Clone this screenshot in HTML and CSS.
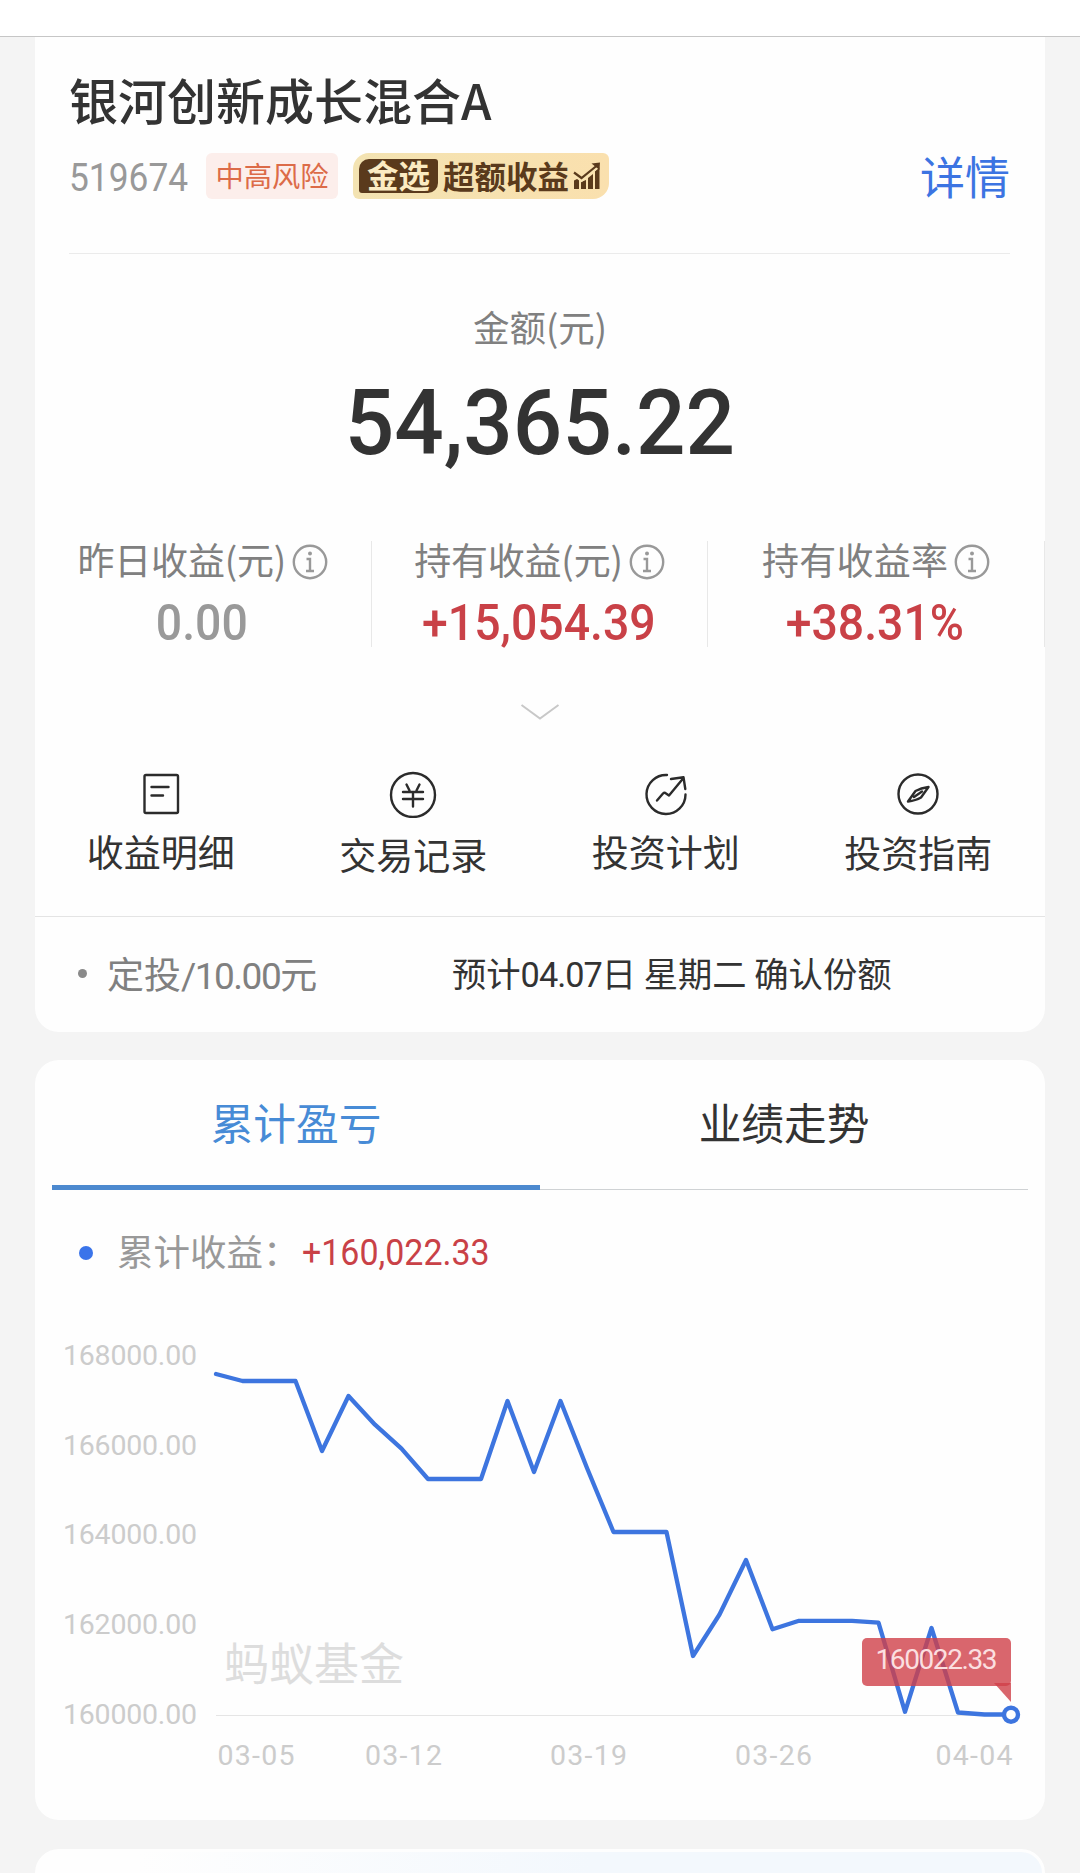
FILE: index.html
```
<!DOCTYPE html>
<html lang="zh-CN">
<head>
<meta charset="utf-8">
<title>银河创新成长混合A</title>
<link rel="stylesheet" href="styles.css">
</head>
<body>
<div class="topbar"></div>
<main class="page">
  <section class="card holding">
    <header class="head">
      <h1 class="title">银河创新成长混合A</h1>
      <div class="meta">
        <span class="code">519674</span>
        <span class="risk">中高风险</span>
        <span class="badge">
          <span class="chip">金选</span>
          <span class="badge-text">超额收益</span>
          <svg class="badge-icon" width="28" height="28" viewBox="0 0 28 28">
            <path d="M1 18.500L6 16v11H1zM8 20l5-2v9H8zM15 16l5-4v15h-5zM22 9l4.500-4v22H22z" fill="#5a3a1c"/>
            <path d="M1 12L8.500 17.500 25 4" fill="none" stroke="#f9e3b2" stroke-width="4.500"/>
            <path d="M1 10.500L8.500 16 24 3.500" fill="none" stroke="#5a3a1c" stroke-width="2.200"/>
            <path d="M18.500 1.500L27 .5 26.500 8z" fill="#5a3a1c"/>
          </svg>
        </span>
        <a class="detail">详情</a>
      </div>
    </header>
    <div class="amount-label">金额(元)</div>
    <div class="amount">54,365.22</div>
    <div class="stats">
      <div class="stat">
        <div class="stat-label">昨日收益(元)<svg class="info" viewBox="0 0 36 36"><circle cx="18" cy="18" r="16.200"/><circle class="dot" cx="18" cy="9.500" r="2"/><path d="M14.500 15H18v12M14 27h8"/></svg></div>
        <div class="stat-value muted">0.00</div>
      </div>
      <div class="stat">
        <div class="stat-label">持有收益(元)<svg class="info" viewBox="0 0 36 36"><circle cx="18" cy="18" r="16.200"/><circle class="dot" cx="18" cy="9.500" r="2"/><path d="M14.500 15H18v12M14 27h8"/></svg></div>
        <div class="stat-value">+15,054.39</div>
      </div>
      <div class="stat">
        <div class="stat-label wide">持有收益率<svg class="info" viewBox="0 0 36 36"><circle cx="18" cy="18" r="16.200"/><circle class="dot" cx="18" cy="9.500" r="2"/><path d="M14.500 15H18v12M14 27h8"/></svg></div>
        <div class="stat-value">+38.31%</div>
      </div>
    </div>
    <svg class="chevron" width="40" height="20" viewBox="0 0 40 20"><path d="M1.500 3L20 16.500 38.500 3"/></svg>
    <nav class="actions">
      <a class="action">
        <svg viewBox="0 0 48 48"><rect x="7.500" y="5" width="33.500" height="38" rx="1.500"/><path d="M14.500 17h17M14.500 25.500h11.500"/></svg>
        <span>收益明细</span>
      </a>
      <a class="action low">
        <svg viewBox="0 0 48 48"><circle cx="24" cy="25" r="22"/><path d="M17.500 14.500L20.500 20.500M30.500 14.500L27.500 20.500M14 22h20M14 29h20M24 22v14.500"/></svg>
        <span>交易记录</span>
      </a>
      <a class="action">
        <svg viewBox="0 0 48 48"><path d="M25 5A19.500 19.500 0 1 0 43.500 24.500M15 30.500L21 23.500q1.500-1.500 3 0l3 2L41.500 8M29 9l12.500-1.800L43.300 19"/></svg>
        <span>投资计划</span>
      </a>
      <a class="action mid">
        <svg viewBox="0 0 48 48"><circle cx="24" cy="24" r="19.500"/><path d="M34.500 17L27 27.500Q22 30.500 14 31.500L21.500 21Q27 18 34.500 17zM20 27L28 21.500"/></svg>
        <span>投资指南</span>
      </a>
    </nav>
    <div class="plan">
      <span class="bullet"></span>
      <span class="plan-name">定投<span class="num">/10.00</span>元</span>
      <span class="plan-note">预计<span class="num">04.07</span>日 星期二 确认份额</span>
    </div>
  </section>

  <section class="card trend">
    <div class="tabs">
      <div class="tab active">累计盈亏</div>
      <div class="tab">业绩走势</div>
    </div>
    <div class="legend">
      <span class="legend-dot"></span>
      <span class="legend-name">累计收益：</span>
      <span class="legend-value">+160,022.33</span>
    </div>
    <svg class="chart" width="1010" height="550" viewBox="35 1270 1010 550">
      <g class="axis">
        <text x="63" y="1365" textLength="134">168000.00</text>
        <text x="63" y="1454.500" textLength="134">166000.00</text>
        <text x="63" y="1544" textLength="134">164000.00</text>
        <text x="63" y="1633.500" textLength="134">162000.00</text>
        <text x="63" y="1723.500" textLength="134">160000.00</text>
        <text x="217.500" y="1765" textLength="77">03-05</text>
        <text x="365" y="1765" textLength="77">03-12</text>
        <text x="550" y="1765" textLength="77">03-19</text>
        <text x="735" y="1765" textLength="77">03-26</text>
        <text x="935.500" y="1765" textLength="77">04-04</text>
      </g>
      <text class="watermark" x="224" y="1681">蚂蚁基金</text>
      <path class="baseline" d="M216 1715.500H1010"/>
      <polyline class="line" points="216,1374 242.500,1381 269,1381 295.500,1381 322,1451 348.500,1396 375,1424.700 401.500,1448.700 428,1479 454.500,1479 481,1479 507.500,1401 534,1472 560.500,1401 587,1468 613.500,1532 640,1532 666.500,1532 693,1656 719.500,1614.500 746,1560 772.500,1629.300 799,1620.800 825.500,1620.800 852,1620.800 878.500,1622.600 905,1711.800 931.500,1628 958,1712.500 984.500,1714.500 1010.500,1714.500"/>
      <g class="tip">
        <rect x="862" y="1638" width="149" height="48" rx="5"/>
        <path d="M994 1683H1011V1702z"/>
        <text x="875.500" y="1669" textLength="122">160022.33</text>
      </g>
      <circle class="marker" cx="1011" cy="1714.700" r="7"/>
    </svg>
  </section>

  <section class="card next"></section>
</main>
</body>
</html>
```
FILE: styles.css
```
* { box-sizing: border-box; }

body {
  margin: 0;
  height: 1873px;
  overflow: hidden;
  background: #f4f4f4;
  color: #333;
  font-family: "Noto Sans CJK SC", sans-serif;
}

.topbar {
  height: 37px;
  background: #fff;
  border-bottom: 1px solid #c6c6c6;
}

.page { padding: 0 35px; }

.card {
  background: #fefefe;
  border-radius: 24px;
}

.holding {
  height: 995px;
  border-radius: 0 0 24px 24px;
  padding-top: 32px;
}

.head {
  margin: 0 35px 0 34px;
  padding-bottom: 54px;
  border-bottom: 1px solid #ebebeb;
}

.title {
  margin: 0;
  font-size: 49px;
  font-weight: 500;
  line-height: 60px;
}

.meta {
  display: flex;
  align-items: center;
  height: 46px;
  margin-top: 24px;
}

.code {
  flex: none;
  width: 137px;
  padding-top: 3px;
  color: #999;
  font: 38px/46px Roboto, sans-serif;
  transform: scaleX(0.93);
  transform-origin: 0 50%;
}

.risk {
  width: 132px;
  margin-right: 15px;
  border-radius: 6px;
  background: #fceeeb;
  color: #dc6b48;
  font-size: 28.300px;
  line-height: 43px;
  height: 46px;
  text-align: center;
}

.badge {
  display: flex;
  align-items: center;
  width: 256px;
  height: 46px;
  padding-left: 6px;
  border-radius: 16px 6px 16px 6px;
  background: linear-gradient(90deg, #f3e3b2, #fae0ae);
  color: #5a3a1c;
  font-size: 31.500px;
  font-weight: 700;
}

.chip {
  width: 79px;
  height: 34px;
  border-radius: 10px 3px 10px 3px;
  background: #5a3a1c;
  color: #fbebc2;
  line-height: 31px;
  text-align: center;
}

.badge-text {
  margin: 0 4px 0 5px;
  padding-bottom: 2px;
  line-height: 42px;
}

.detail {
  margin-left: auto;
  color: #3c74e2;
  font-size: 45px;
  line-height: 42px;
}

.amount-label {
  margin-top: 48px;
  color: #808080;
  font-size: 36.500px;
  line-height: 50px;
  text-align: center;
}

.amount {
  margin-top: 22px;
  font: 500 90px/100px Roboto, sans-serif;
  transform: scaleX(0.968);
  text-align: center;
}

.stats {
  display: grid;
  grid-template-columns: repeat(3, 1fr);
  height: 105px;
  margin-top: 67px;
}

.stat {
  border-right: 1px solid #e8e8e8;
  text-align: center;
}

.stat-label {
  display: flex;
  align-items: center;
  justify-content: center;
  gap: 6px;
  color: #808080;
  font-size: 37px;
  line-height: 34px;
  letter-spacing: -0.200px;
}

.stat-label.wide { letter-spacing: 0.300px; }

.info {
  width: 36px;
  height: 36px;
  position: relative;
  top: 3px;
  fill: none;
  stroke: #999;
  stroke-width: 2.400;
}

.info .dot { fill: #999; stroke: none; }

.stat-value {
  margin-top: 22px;
  color: #c94147;
  font: 500 50px/48px Roboto, sans-serif;
  transform: translateX(-1px) scaleX(0.928);
}

.stat-value.muted { color: #999; }

.chevron {
  display: block;
  margin: 56px auto 0;
  fill: none;
  stroke: #c8c8c8;
  stroke-width: 2;
}

.actions {
  display: grid;
  grid-template-columns: repeat(4, 1fr);
  height: 146px;
  margin-top: 48px;
}

.action {
  display: flex;
  flex-direction: column;
  align-items: center;
  gap: 13px;
  padding-right: 1px;
  font-size: 37px;
  line-height: 40px;
}

.action svg {
  width: 48px;
  height: 48px;
  fill: none;
  stroke: #2b2b2b;
  stroke-width: 2.400;
  stroke-linecap: round;
  stroke-linejoin: round;
}

.action.low { gap: 16px; }
.action.mid { gap: 14px; }

.plan {
  display: flex;
  align-items: center;
  height: 116px;
  padding: 0 0 3px 43px;
  border-top: 1px solid #e4e4e4;
  line-height: 50px;
  white-space: nowrap;
}

.bullet {
  width: 9px;
  height: 9px;
  border-radius: 50%;
  background: #8a8a8a;
}

.plan-name {
  width: 345px;
  margin-left: 20px;
  padding-top: 4px;
  color: #808080;
  font-size: 37px;
}

.num { font-family: Roboto, sans-serif; }
.plan-name .num { letter-spacing: -1.500px; }

.plan-note { font-size: 34.300px; }
.plan-note .num { letter-spacing: -1px; }

.trend {
  height: 760px;
  margin-top: 28px;
}

.tabs {
  display: grid;
  grid-template-columns: 1fr 1fr;
  height: 130px;
  margin: 0 17px;
}

.tab {
  border-bottom: 1px solid #cfd2d4;
  font-size: 42.700px;
  line-height: 122px;
  text-align: center;
}

.tab.active {
  border-bottom: 5px solid #4c89cf;
  color: #478bd6;
}

.legend {
  display: flex;
  align-items: center;
  height: 42px;
  margin-top: 39px;
  margin-bottom: -1px;
  padding-left: 44px;
  line-height: 42px;
}

.legend-dot {
  width: 14px;
  height: 14px;
  margin-top: 6px;
  border-radius: 50%;
  background: #3a74ea;
}

.legend-name {
  width: 185px;
  margin-left: 24px;
  padding-top: 1px;
  color: #999;
  font-size: 36.500px;
}

.legend-value {
  padding-top: 5px;
  color: #c94147;
  font: 37px/42px Roboto, sans-serif;
  transform: scaleX(0.918);
  transform-origin: 0 50%;
}

.chart { display: block; }

.axis {
  fill: #ccc;
  font: 28.500px Roboto, sans-serif;
}

.watermark {
  fill: #ddd;
  font-size: 45px;
}

.baseline { stroke: #e5e5e5; stroke-width: 1.200; }

.line {
  fill: none;
  stroke: #3d75df;
  stroke-width: 4.300;
  stroke-linejoin: round;
  stroke-linecap: round;
}

.tip { fill: rgba(207, 64, 73, 0.8); }
.tip text { fill: #fbdfe0; font: 28px Roboto, sans-serif; }

.marker { fill: #fff; stroke: #3d75df; stroke-width: 4.400; }

.next {
  height: 60px;
  margin-top: 29px;
  border: 3px solid #fefefe;
  background: linear-gradient(90deg, #fefefe 10%, #f3f8fd 55%);
}
```
